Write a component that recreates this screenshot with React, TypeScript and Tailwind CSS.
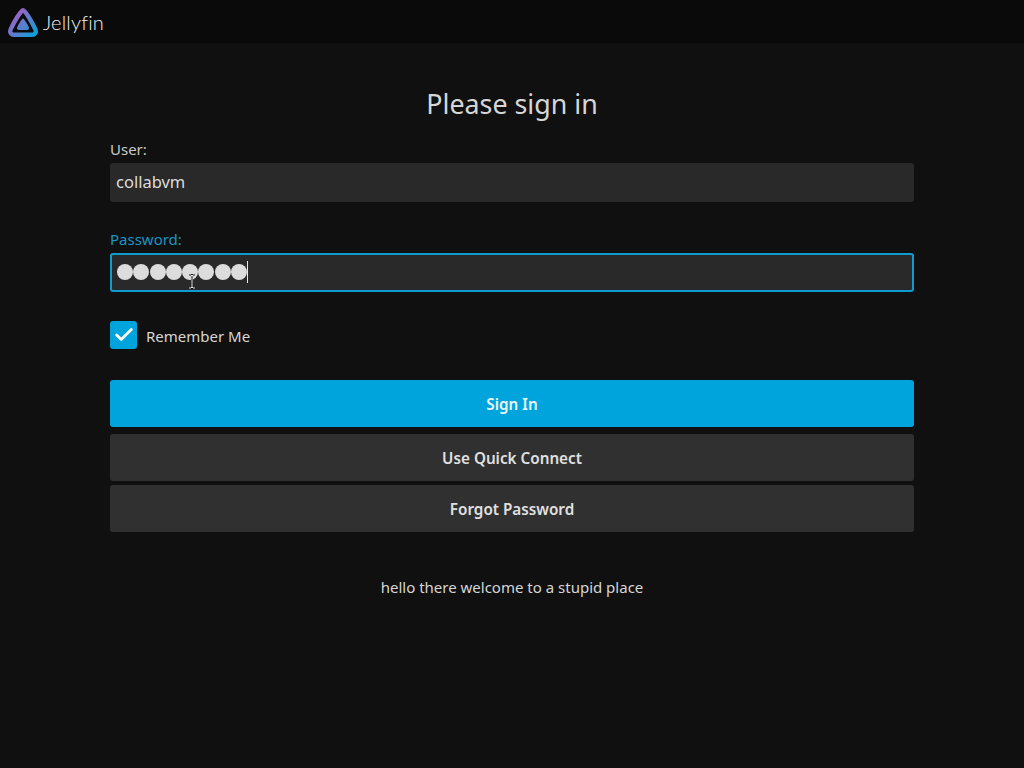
import { Check } from "lucide-react"

const font = { fontFamily: '"Noto Sans", sans-serif' }

function Logo() {
    return (
        <svg width="32" height="34" viewBox="0 0 32 34" fill="none">
            <defs>
                <linearGradient id="jf" x1="6" y1="8" x2="30" y2="30" gradientUnits="userSpaceOnUse">
                    <stop offset="0" stopColor="#aa5cc3" />
                    <stop offset="1" stopColor="#00a4dc" />
                </linearGradient>
            </defs>
            <path
                d="M16 5.2C14 5.2 7 17 3.6 24.4 2.3 27.4 4.2 29.8 7 29.8H25C27.8 29.8 29.7 27.4 28.4 24.4 25 17 18 5.2 16 5.2Z"
                stroke="url(#jf)"
                strokeWidth="4.4"
                strokeLinejoin="round"
            />
            <path d="M16 13.6C15 13.6 11.4 19.4 10.2 22.2 9.6 23.8 10.5 25 11.9 25H20.1C21.5 25 22.4 23.8 21.8 22.2 20.6 19.4 17 13.6 16 13.6Z" fill="url(#jf)" />
        </svg>
    )
}

function Button({ label, primary }: { label: string; primary?: boolean }) {
    return (
        <button
            className={`h-[47px] w-full rounded-[3px] pt-[2px] text-[15.25px] font-semibold ${
                primary ? "bg-[#00a4dc] text-[#e8f6fb]" : "bg-[#303030] text-[#e0e0e0]"
            }`}
        >
            {label}
        </button>
    )
}

export default function App() {
    return (
        <div className="min-h-[768px] bg-[#101010] text-[#d6d6d6]" style={font}>
            {/* header */}
            <div className="flex h-[43px] items-center gap-[4px] bg-[#0a0a0a] pl-[7px]">
                <Logo />
                <span className="text-[20px] font-light tracking-[0.2px] text-[#f2f2f2]" style={{ fontFamily: "Lato, sans-serif" }}>
                    Jellyfin
                </span>
            </div>

            <div className="px-[110px]">
                <h1 className="mt-[43px] text-center text-[26.8px] leading-[36px] text-[#d6d6d6]">Please sign in</h1>

                {/* user */}
                <label className="mt-[17px] block text-[15px] leading-[20px] text-[#c8c8c8]">User:</label>
                <div className="mt-[4px] flex h-[39px] items-center rounded-[3px] bg-[#292929] px-[6px] pb-[1px] text-[16.5px] text-[#dcdcdc]">collabvm</div>

                {/* password */}
                <label className="mt-[27px] block text-[15px] leading-[20px] text-[#1a94c4]">Password:</label>
                <div className="relative mt-[4px] flex h-[39px] items-center rounded-[3px] border-2 border-[#0f9bd0] bg-[#292929] px-[5px] pb-[2px]">
                    <div className="flex gap-[0.3px]">
                        {[0, 1, 2, 3, 4, 5, 6, 7].map((i) => (
                            <span key={i} className="h-[16px] w-[16px] rounded-full bg-[#dcdcdc]" />
                        ))}
                    </div>
                    <span className="h-[22px] w-px bg-[#e8e8e8]" />
                    {/* mouse cursor over the field */}
                    <svg className="absolute left-[76px] top-[19px]" width="8" height="15" viewBox="0 0 8 15" fill="none">
                        <path d="M1 1H3L4 2 5 1H7M4 2V13M1 14H3L4 13 5 14H7" stroke="#111111" strokeWidth="2" />
                        <path d="M1 1H3L4 2 5 1H7M4 2V13M1 14H3L4 13 5 14H7" stroke="#f0f0f0" strokeWidth="1" />
                    </svg>
                </div>

                {/* remember */}
                <div className="mt-[29px] flex items-center gap-[9px]">
                    <div className="flex h-[28px] w-[27px] items-center justify-center rounded-[3px] bg-[#00a4dc]">
                        <Check size={22} strokeWidth={3} className="text-white" />
                    </div>
                    <span className="pt-[3px] text-[15px] text-[#d6d6d6]">Remember Me</span>
                </div>

                {/* buttons */}
                <div className="mt-[31px]">
                    <Button label="Sign In" primary />
                </div>
                <div className="mt-[7px]">
                    <Button label="Use Quick Connect" />
                </div>
                <div className="mt-[4px]">
                    <Button label="Forgot Password" />
                </div>

                <p className="mt-[43px] text-center text-[15px] leading-[24px] text-[#d6d6d6]">hello there welcome to a stupid place</p>
            </div>
        </div>
    )
}
